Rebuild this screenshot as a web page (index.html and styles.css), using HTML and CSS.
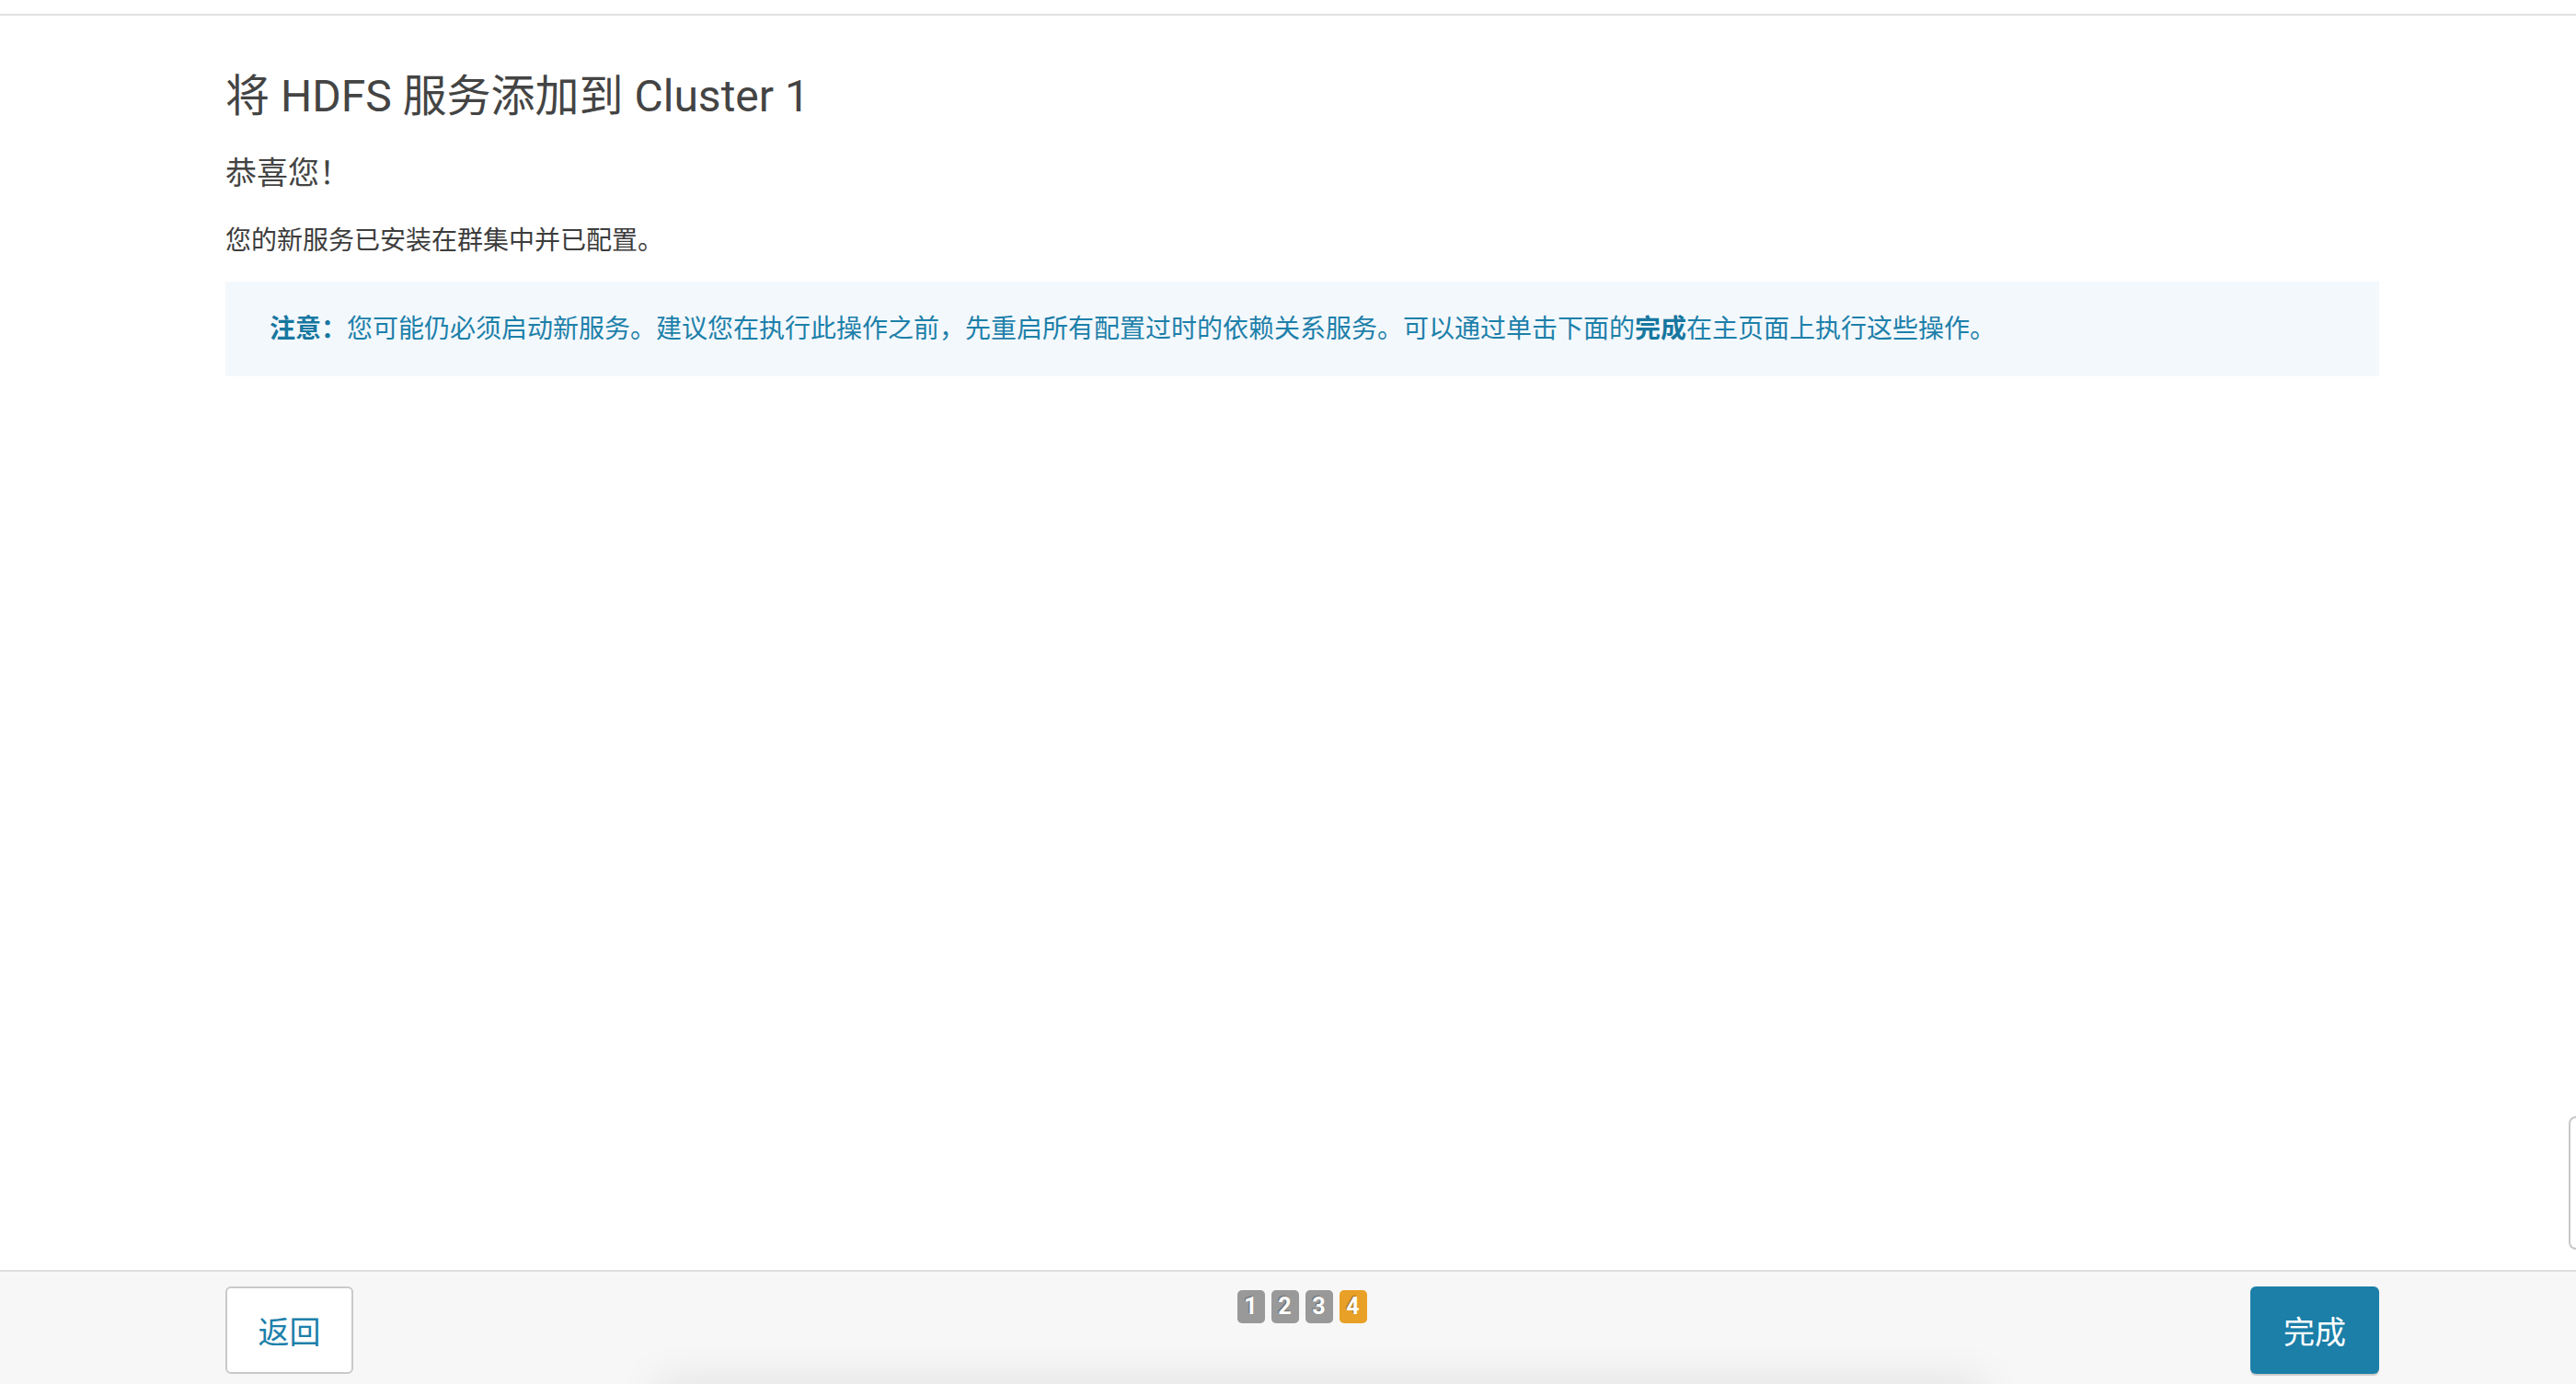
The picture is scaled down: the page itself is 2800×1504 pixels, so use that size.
FILE: index.html
```html
<!DOCTYPE html>
<html lang="zh-CN">
<head>
<meta charset="utf-8">
<title>将 HDFS 服务添加到 Cluster 1</title>
<link rel="stylesheet" href="styles.css">
</head>
<body>
<div class="topbar"></div>
<main class="main">
  <div class="container">
    <h1 class="title">将 HDFS 服务添加到 Cluster 1</h1>
    <h2 class="subtitle">恭喜您！</h2>
    <p class="lead">您的新服务已安装在群集中并已配置。</p>
    <div class="alert"><strong>注意：</strong>您可能仍必须启动新服务。建议您在执行此操作之前，先重启所有配置过时的依赖关系服务。可以通过单击下面的<strong>完成</strong>在主页面上执行这些操作。</div>
  </div>
</main>
<footer class="footer">
  <div class="container footer-row">
    <button class="btn btn-back">返回</button>
    <div class="steps">
      <span class="step">1</span>
      <span class="step">2</span>
      <span class="step">3</span>
      <span class="step step-active">4</span>
    </div>
    <button class="btn btn-primary">完成</button>
  </div>
</footer>
<div class="feedback-tab"></div>
</body>
</html>
```
FILE: styles.css
```css
html, body {
  margin: 0;
  padding: 0;
  height: 100%;
}
body {
  font-family: Roboto, "Noto Sans CJK SC", sans-serif;
  color: #444;
  background: #fff;
  display: flex;
  flex-direction: column;
  height: 100vh;
  overflow: hidden;
}
.topbar {
  height: 15px;
  border-bottom: 2px solid #e2e2e2;
  flex: none;
}
.main {
  flex: 1;
}
.container {
  width: 2341px;
  margin-left: 245px;
}
.title {
  margin: 62px 0 0;
  font-size: 48px;
  line-height: 52.8px;
  font-weight: 400;
  color: #444;
}
.subtitle {
  margin: 38px 0 0;
  font-size: 34px;
  line-height: 37.4px;
  font-weight: 400;
  color: #444;
}
.lead {
  margin: 35px 0 0;
  font-size: 28px;
  line-height: 40px;
  color: #3d3d3d;
}
.alert {
  margin-top: 24px;
  background: #f3f8fc;
  color: #1d80aa;
  font-size: 28px;
  line-height: 40px;
  padding: 31.5px 48px;
}
.alert strong {
  font-weight: 700;
  color: #17779f;
}
.footer {
  flex: none;
  height: 124px;
  box-sizing: border-box;
  border-top: 2px solid #dedede;
  background: #f7f7f7;
  padding-top: 16px;
  position: relative;
  overflow: hidden;
}
.footer::after {
  content: "";
  position: absolute;
  left: 710px;
  width: 1450px;
  bottom: -24px;
  height: 24px;
  border-radius: 20px;
  box-shadow: 0 0 46px 0 rgba(0, 0, 0, 0.13);
}
.footer-row {
  display: flex;
  justify-content: space-between;
  align-items: flex-start;
  position: relative;
  z-index: 1;
}
.btn {
  font-family: Roboto, "Noto Sans CJK SC", sans-serif;
  font-size: 34px;
  height: 95px;
  border-radius: 6px;
  padding: 0;
  cursor: pointer;
}
.btn-back {
  width: 139px;
  background: #fff;
  border: 2px solid #c9c9c9;
  color: #1d80aa;
}
.btn-primary {
  width: 140px;
  background: #1b7fa8;
  border: none;
  color: #fff;
  box-shadow: 0 2px 1px rgba(0, 0, 0, 0.18);
}
.steps {
  display: flex;
  gap: 7px;
  margin-top: 4px;
}
.step {
  width: 30px;
  height: 36px;
  border-radius: 5px;
  background: #999;
  color: #fff;
  font-family: Roboto, sans-serif;
  font-weight: 700;
  font-size: 25px;
  line-height: 36px;
  text-align: center;
  text-shadow: -1px -1px 1px rgba(0, 0, 0, 0.3);
}
.step-active {
  background: #e9a027;
}
.feedback-tab {
  position: fixed;
  right: 0;
  top: 1213px;
  width: 6px;
  height: 141px;
  border: 2px solid #c8c8c8;
  border-right: none;
  border-radius: 8px 0 0 8px;
  background: #fff;
}
```
